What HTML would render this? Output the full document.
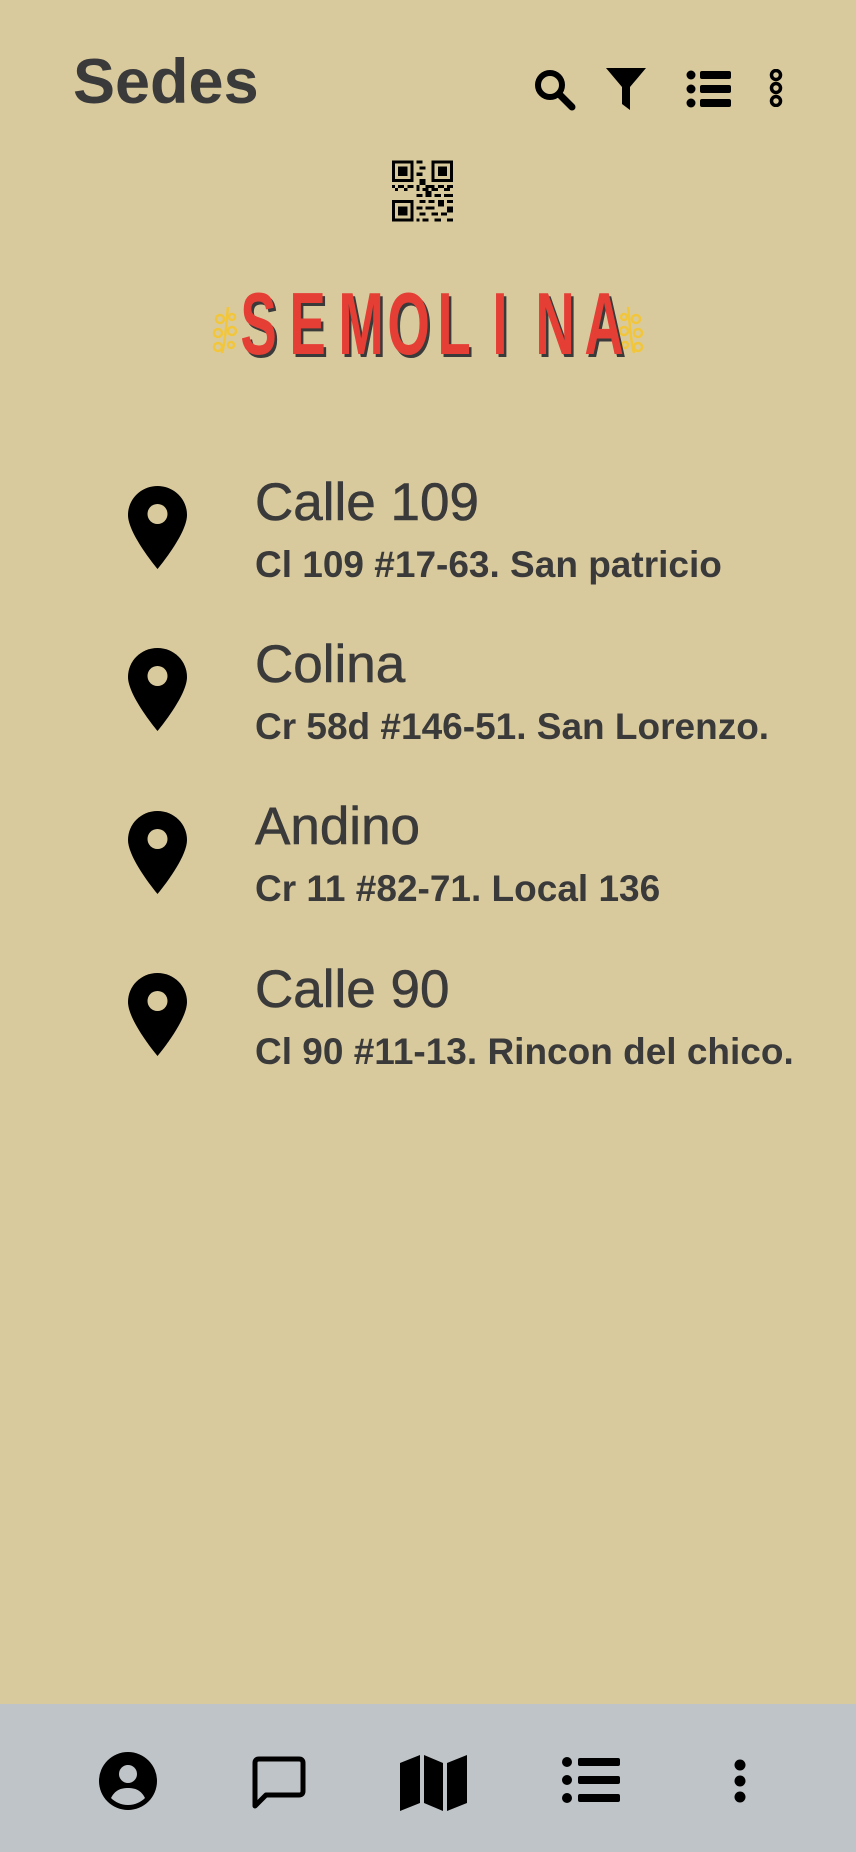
<!DOCTYPE html>
<html><head><meta charset="utf-8"><style>
*{margin:0;padding:0;box-sizing:border-box}
body{width:856px;height:1852px;background:#d9ca9e;position:relative;overflow:hidden;font-family:"Liberation Sans",sans-serif;color:#3a3a3a}
.a{position:absolute}
.t{position:absolute;left:255px;font-size:53px;line-height:1;white-space:nowrap;-webkit-text-stroke:0.6px #3a3a3a}
.s{position:absolute;left:255px;font-size:37px;font-weight:700;line-height:1;white-space:nowrap}
.bar{position:absolute;left:0;top:1704px;width:856px;height:148px;background:#bfc4c8}
.logo{position:absolute;left:232px;top:280px;width:388px;display:flex;justify-content:space-between;font-size:88px;font-weight:700;color:#e53e35;line-height:1;text-shadow:4px 3px 0 #3a3a3a}
.logo span{display:inline-block;width:44px;text-align:center;transform:scaleX(0.62)}
</style></head><body>
<div class="a" style="left:73px;top:51px;font-size:63px;font-weight:700;line-height:1;color:#3a3a3a">Sedes</div>
<!-- header icons -->
<svg class="a" style="left:533px;top:68px" width="44" height="44" viewBox="0 0 44 44"><circle cx="17" cy="17" r="12" fill="none" stroke="#000" stroke-width="6"/><path d="M26 26L39 39" stroke="#000" stroke-width="7" stroke-linecap="round"/></svg>
<svg class="a" style="left:605px;top:67px" width="42" height="44" viewBox="0 0 42 44"><path d="M1 1H41L25 20V43L17 37V20Z" fill="#000"/></svg>
<svg class="a" style="left:686px;top:70px" width="45" height="38" viewBox="0 0 45 38"><circle cx="5" cy="5" r="4.5"/><circle cx="5" cy="19" r="4.5"/><circle cx="5" cy="33" r="4.5"/><rect x="14" y="1" width="31" height="8" rx="2"/><rect x="14" y="15" width="31" height="8" rx="2"/><rect x="14" y="29" width="31" height="8" rx="2"/></svg>
<svg class="a" style="left:769px;top:69px" width="14" height="38" viewBox="0 0 14 38"><circle cx="7" cy="6" r="4.5" fill="none" stroke="#000" stroke-width="3.5"/><circle cx="7" cy="19" r="4.5" fill="none" stroke="#000" stroke-width="3.5"/><circle cx="7" cy="32" r="4.5" fill="none" stroke="#000" stroke-width="3.5"/></svg>
<!-- QR -->
<svg class="a" style="left:392px;top:160px" width="61" height="62" viewBox="0 0 20 20" shape-rendering="crispEdges">
<path d="M0 0h7v7h-7zM1 1v5h5v-5zM2 2h3v3h-3z M13 0h7v7h-7zM14 1v5h5v-5zM15 2h3v3h-3z M0 13h7v7h-7zM1 14v5h5v-5zM2 15h3v3h-3z" fill="#000" fill-rule="evenodd"/>
<path d="M8 0h2v1h-2zM9 2h2v1h-2zM8 4h2v1h-2zM9 6h2v2h-2zM0 8h1v1h-1zM2 8h2v1h-2zM5 8h2v1h-2zM8 8h1v2h-1zM11 8h3v1h-3zM15 8h2v1h-2zM18 8h2v1h-2zM1 9h1v1h-1zM4 9h1v1h-1zM10 9h2v1h-2zM13 9h2v1h-2zM17 9h2v1h-2zM8 11h2v1h-2zM11 10h2v2h-2zM14 11h2v1h-2zM17 11h3v1h-3zM9 13h2v1h-2zM12 13h2v1h-2zM15 13h2v2h-2zM18 13h2v1h-2zM8 15h2v1h-2zM11 15h3v1h-3zM18 15h2v2h-2zM9 17h2v1h-2zM13 17h2v1h-2zM16 17h2v1h-2zM8 19h1v1h-1zM10 19h2v1h-2zM14 19h2v1h-2zM18 19h2v1h-2z" fill="#000"/></svg>
<!-- logo -->
<svg class="a" style="left:212px;top:305px" width="26" height="50" viewBox="0 0 26 50"><g fill="none" stroke="#f2c63a" stroke-width="2.5"><path d="M16 2C14 18 14 34 10 48"/><circle cx="8" cy="14" r="4"/><circle cx="20" cy="12" r="3"/><circle cx="6" cy="28" r="4"/><circle cx="20" cy="26" r="4"/><circle cx="6" cy="42" r="4"/><circle cx="19" cy="40" r="3"/></g></svg>
<svg class="a" style="left:618px;top:305px" width="26" height="50" viewBox="0 0 26 50"><g fill="none" stroke="#f2c63a" stroke-width="2.5"><path d="M10 2C12 18 12 34 16 48"/><circle cx="18" cy="14" r="4"/><circle cx="6" cy="12" r="3"/><circle cx="20" cy="28" r="4"/><circle cx="6" cy="26" r="4"/><circle cx="20" cy="42" r="4"/><circle cx="7" cy="40" r="3"/></g></svg>
<div class="logo"><span>S</span><span>E</span><span>M</span><span>O</span><span>L</span><span>I</span><span>N</span><span>A</span></div>
<!-- list -->
<svg class="a" style="left:128px;top:486px" width="59" height="83" viewBox="0 0 59 83"><path d="M29.5 0C13 0 0 13 0 29C0 48 29.5 83 29.5 83S59 48 59 29C59 13 46 0 29.5 0Z" fill="#000"/><circle cx="29.5" cy="28" r="10" fill="#d9ca9e"/></svg>
<div class="t" style="top:476px">Calle 109</div>
<div class="s" style="top:546px">Cl 109 #17-63. San patricio</div>
<svg class="a" style="left:128px;top:648px" width="59" height="83" viewBox="0 0 59 83"><path d="M29.5 0C13 0 0 13 0 29C0 48 29.5 83 29.5 83S59 48 59 29C59 13 46 0 29.5 0Z" fill="#000"/><circle cx="29.5" cy="28" r="10" fill="#d9ca9e"/></svg>
<div class="t" style="top:638px">Colina</div>
<div class="s" style="top:708px">Cr 58d #146-51. San Lorenzo.</div>
<svg class="a" style="left:128px;top:811px" width="59" height="83" viewBox="0 0 59 83"><path d="M29.5 0C13 0 0 13 0 29C0 48 29.5 83 29.5 83S59 48 59 29C59 13 46 0 29.5 0Z" fill="#000"/><circle cx="29.5" cy="28" r="10" fill="#d9ca9e"/></svg>
<div class="t" style="top:800px">Andino</div>
<div class="s" style="top:870px">Cr 11 #82-71. Local 136</div>
<svg class="a" style="left:128px;top:973px" width="59" height="83" viewBox="0 0 59 83"><path d="M29.5 0C13 0 0 13 0 29C0 48 29.5 83 29.5 83S59 48 59 29C59 13 46 0 29.5 0Z" fill="#000"/><circle cx="29.5" cy="28" r="10" fill="#d9ca9e"/></svg>
<div class="t" style="top:963px">Calle 90</div>
<div class="s" style="top:1033px">Cl 90 #11-13. Rincon del chico.</div>
<!-- bottom bar -->
<div class="bar"></div>
<svg class="a" style="left:99px;top:1752px" width="58" height="58" viewBox="0 0 58 58"><circle cx="29" cy="29" r="29"/><circle cx="29" cy="22" r="9" fill="#bfc4c8"/><path d="M12 46C16 38 22 36 29 36S42 38 46 46C42 50 36 53 29 53S16 50 12 46Z" fill="#bfc4c8"/></svg>
<svg class="a" style="left:252px;top:1756px" width="54" height="54" viewBox="0 0 54 54"><path d="M3 50V7Q3 3 7 3H47Q51 3 51 7V35Q51 39 47 39H14Z" fill="none" stroke="#000" stroke-width="5" stroke-linejoin="round"/></svg>
<svg class="a" style="left:400px;top:1755px" width="67" height="56" viewBox="0 0 67 56"><path d="M0 8L20 0V48L0 56Z M24 0L43 8V56L24 48Z M47 8L67 0V48L47 56Z" fill="#000"/></svg>
<svg class="a" style="left:562px;top:1757px" width="58" height="46" viewBox="0 0 58 46"><circle cx="5" cy="5" r="5"/><circle cx="5" cy="23" r="5"/><circle cx="5" cy="41" r="5"/><rect x="16" y="1" width="42" height="8" rx="2"/><rect x="16" y="19" width="42" height="8" rx="2"/><rect x="16" y="37" width="42" height="8" rx="2"/></svg>
<svg class="a" style="left:734px;top:1759px" width="12" height="44" viewBox="0 0 12 44"><circle cx="6" cy="6" r="5.5"/><circle cx="6" cy="22" r="5.5"/><circle cx="6" cy="38" r="5.5"/></svg>
</body></html>
